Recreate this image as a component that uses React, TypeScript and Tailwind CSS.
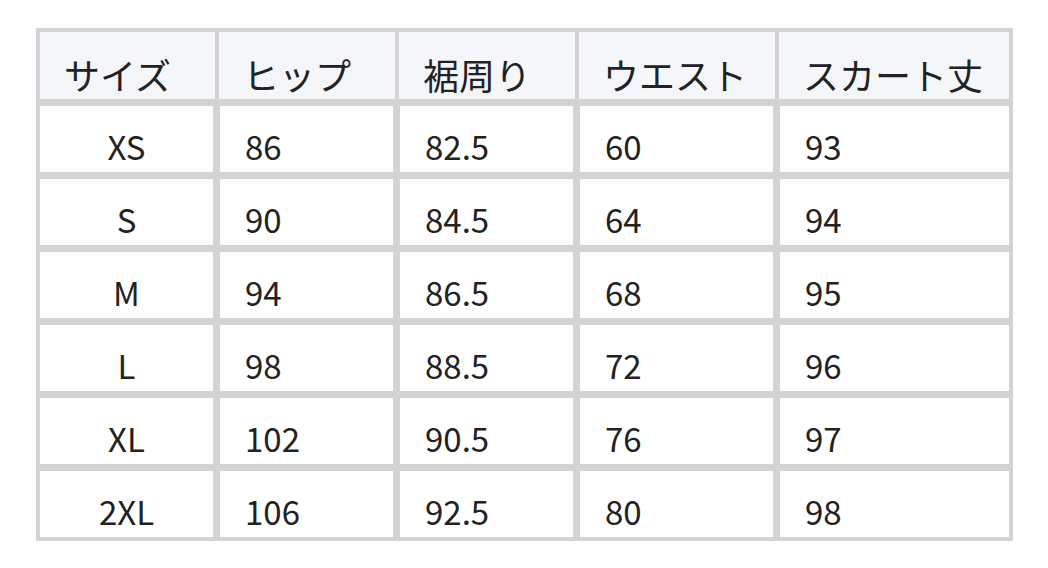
const headers = ['サイズ', 'ヒップ', '裾周り', 'ウエスト', 'スカート丈'];

const rows = [
  ['XS', '86', '82.5', '60', '93'],
  ['S', '90', '84.5', '64', '94'],
  ['M', '94', '86.5', '68', '95'],
  ['L', '98', '88.5', '72', '96'],
  ['XL', '102', '90.5', '76', '97'],
  ['2XL', '106', '92.5', '80', '98'],
];

export default function App() {
  return (
    <div
      className="min-h-screen bg-white pt-[28px] pl-[36px] text-[#222222]"
      style={{ fontFamily: '"Noto Sans CJK JP", "Noto Sans", sans-serif' }}
    >
      <div className="flex w-[977px] flex-col gap-[7px] bg-[#d3d3d3] p-[4px]">
        {/* header row */}
        <div className="grid h-[67px] grid-cols-[175px_176px_176px_196px_230px] gap-x-[4px]">
          {headers.map((h) => (
            <div key={h} className="bg-[#f5f6fa] pl-[24px] pt-[20px] text-[36px] leading-[45px]">
              {h}
            </div>
          ))}
        </div>

        {rows.map((r) => (
          <div key={r[0]} className="grid h-[66px] grid-cols-[173px_173px_173px_193px_229px] gap-x-[7px]">
            {r.map((cell, i) => (
              <div
                key={i}
                className={
                  i === 0
                    ? 'bg-white pt-[18px] text-center text-[33px] leading-[45px]'
                    : 'bg-white pl-[25px] pt-[18px] text-[33px] leading-[45px]'
                }
              >
                {cell}
              </div>
            ))}
          </div>
        ))}
      </div>
    </div>
  );
}
